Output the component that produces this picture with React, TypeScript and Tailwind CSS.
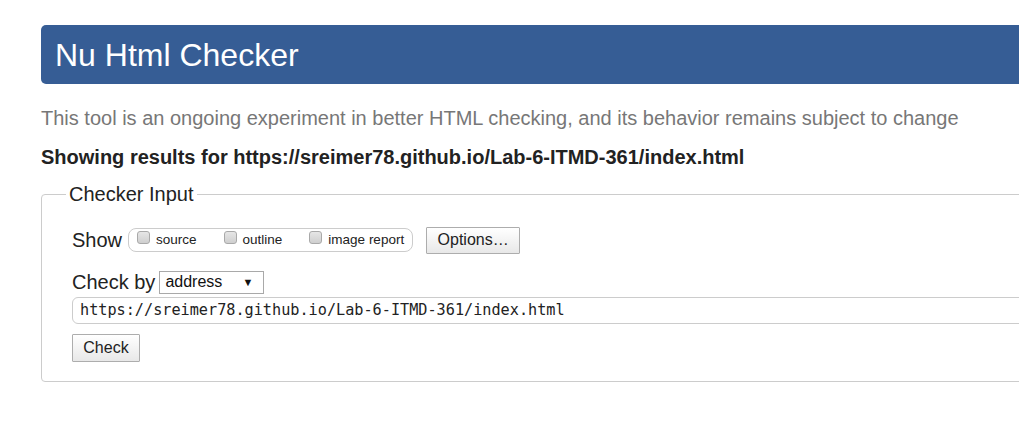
import React from "react";

function Box({ label }: { label: string }) {
  return (
    <label className="flex items-center">
      <span className="w-[13px] h-[13px] rounded-[3px] border border-[#a9a9a9] bg-gradient-to-b from-[#e6e6e6] to-[#cfcfcf] mr-[6px] -mt-[5px]" />
      <span className="text-[13.5px] text-[#222]">{label}</span>
    </label>
  );
}

export default function App() {
  return (
    <div className="w-[1019px] h-[441px] overflow-hidden bg-white" style={{ fontFamily: '"Liberation Sans", Arial, sans-serif' }}>
      <div className="pt-[25px] pl-[41px]">
        <div className="w-[1100px] h-[59px] bg-[#365d95] rounded-l-[5px] flex items-center pl-[14px]">
          <h1 className="text-white text-[32px] leading-none">Nu Html Checker</h1>
        </div>
        <p className="mt-[22px] text-[20px] text-[#777] leading-[24px]">
          This tool is an ongoing experiment in better HTML checking, and its behavior remains subject to change
        </p>
        <p className="mt-[15px] text-[20px] font-bold text-[#222] leading-[24px]">
          Showing results for https://sreimer78.github.io/Lab-6-ITMD-361/index.html
        </p>
        <fieldset className="mt-[13px] w-[1100px] h-[200px] border border-[#ccc] rounded-[4px] pl-[30px] pr-0 pt-[21px]">
          <legend className="-ml-[6px] px-[3px] text-[20px] text-[#222] leading-[24px]">Checker Input</legend>
          <div className="flex items-center h-[26px]">
            <span className="text-[20px] text-[#222] mr-[6px]">Show</span>
            <div className="flex items-center gap-[27px] h-[24px] border border-[#ccc] rounded-[8px] pl-[8px] pr-[8px]">
              <Box label="source" />
              <Box label="outline" />
              <Box label="image report" />
            </div>
            <button className="ml-[13px] h-[27px] w-[94px] border border-[#adadad] bg-gradient-to-b from-white to-[#e8e8e8] text-[16px] text-[#222] rounded-[1px]">
              Options…
            </button>
          </div>
          <div className="flex items-center mt-[17px] h-[24px]">
            <span className="text-[20px] text-[#222] mr-[4px]">Check by</span>
            <div className="h-[23px] w-[105px] border border-[#a9a9a9] flex items-center justify-between pl-[5px] pr-[10px] text-[16px] text-[#111]">
              <span>address</span>
              <span className="text-[11px]">▼</span>
            </div>
          </div>
          <div className="mt-[3px] h-[27px] w-[1100px] border border-[#ccc] rounded-[6px] flex items-center pl-[7px] text-[15.2px] text-[#222]" style={{ fontFamily: '"DejaVu Sans Mono", monospace' }}>
            https://sreimer78.github.io/Lab-6-ITMD-361/index.html
          </div>
          <button className="mt-[10px] h-[28px] w-[68px] border border-[#adadad] bg-gradient-to-b from-white to-[#e8e8e8] text-[16px] text-[#222] rounded-[1px]">
            Check
          </button>
        </fieldset>
      </div>
    </div>
  );
}
